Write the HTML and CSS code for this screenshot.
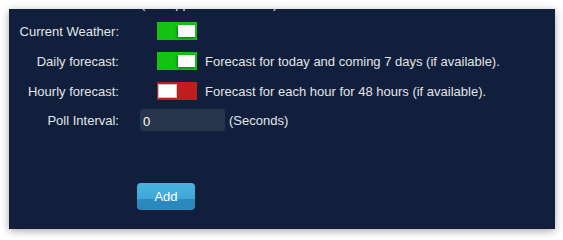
FILE: index.html
```html
<!DOCTYPE html>
<html>
<head>
<meta charset="utf-8">
<link rel="stylesheet" href="styles.css">
</head>
<body>
<div class="panel">
  <div class="form">
    <div class="row first">
      <div class="label"></div>
      <div class="control"><span class="note">(0 = Application default)</span></div>
    </div>
    <div class="row">
      <div class="label">Current Weather:</div>
      <div class="control"><span class="toggle on"><span class="knob"></span></span></div>
    </div>
    <div class="row">
      <div class="label">Daily forecast:</div>
      <div class="control"><span class="toggle on"><span class="knob"></span></span><span class="desc">Forecast for today and coming 7 days (if available).</span></div>
    </div>
    <div class="row">
      <div class="label">Hourly forecast:</div>
      <div class="control"><span class="toggle off"><span class="knob"></span></span><span class="desc">Forecast for each hour for 48 hours (if available).</span></div>
    </div>
    <div class="row poll">
      <div class="label">Poll Interval:</div>
      <div class="control"><input class="input" type="text" value="0"><span class="unit">(Seconds)</span></div>
    </div>
    <div class="actions">
      <button class="btn">Add</button>
    </div>
  </div>
</div>
</body>
</html>
```
FILE: styles.css
```css
html, body {
  margin: 0;
  padding: 0;
  background: #ffffff;
}
body {
  width: 563px;
  height: 238px;
  overflow: hidden;
  font-family: "Liberation Sans", Arial, sans-serif;
  font-size: 13px;
  color: #e2e4e8;
}
.panel {
  margin: 9px 0 0 9px;
  width: 546px;
  height: 220px;
  background: #111f3c;
  overflow: hidden;
  box-shadow: 0 2px 8px rgba(0, 0, 0, 0.35);
}
.form {
  margin-top: -19px;
}
.row {
  display: grid;
  grid-template-columns: 110px 1fr;
  column-gap: 19px;
  height: 30px;
  align-items: center;
}
.row.first {
  height: 26px;
}
.row.poll {
  margin-top: -1px;
}
.label {
  text-align: right;
  white-space: nowrap;
}
.control {
  display: flex;
  align-items: center;
  white-space: nowrap;
}
.note {
  margin-left: 3px;
}
.toggle {
  position: relative;
  display: block;
  width: 40px;
  height: 18px;
  margin-left: 19px;
}
.toggle.on {
  background: #13c214;
}
.toggle.off {
  background: #c01e1e;
}
.knob {
  position: absolute;
  top: 3px;
  width: 17px;
  height: 12px;
  background: #ffffff;
}
.toggle.on .knob {
  right: 2px;
  box-shadow: -1px 1px 2px rgba(0, 60, 0, 0.55);
}
.toggle.off .knob {
  left: 1px;
  top: 2px;
  width: 17px;
  height: 12px;
  border: 1px solid #c8c8c8;
}
.desc {
  margin-left: 8px;
}
.input {
  margin: 0 0 0 2px;
  width: 85px;
  height: 22px;
  box-sizing: border-box;
  border: none;
  border-radius: 3px;
  background: #28354c;
  color: #ffffff;
  font-family: "Liberation Sans", Arial, sans-serif;
  font-size: 13px;
  padding: 2px 3px 0;
  outline: none;
}
.unit {
  margin-left: 4px;
}
.actions {
  padding-left: 128px;
  margin-top: 48px;
}
.btn {
  display: block;
  width: 58px;
  height: 27px;
  border: none;
  border-radius: 4px;
  background: linear-gradient(to bottom, #4bb3df 0%, #3ea6d6 60%, #2b89c0 61%, #2b88be 100%);
  color: #ffffff;
  font-family: "Liberation Sans", Arial, sans-serif;
  font-size: 13px;
  padding: 0;
}
```
